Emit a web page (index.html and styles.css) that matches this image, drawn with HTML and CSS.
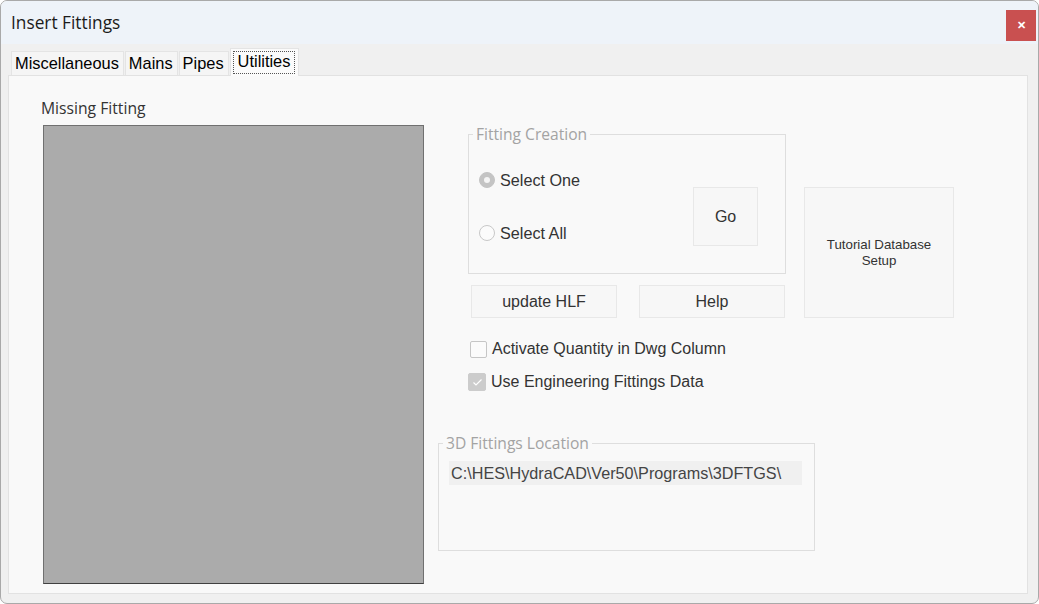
FILE: index.html
```html
<!DOCTYPE html>
<html lang="en">

<head>
    <meta charset="UTF-8">
    <title>Insert Fittings</title>
    <link rel="stylesheet" href="styles.css">
</head>

<body>
    <div class="ventana">
        <div class="titulo">
            <span class="titulo-texto">Insert Fittings</span>
            <div class="cerrar">&#x2715;</div>
        </div>

        <div class="pestanas">
            <div class="pestana">Miscellaneous</div>
            <div class="pestana">Mains</div>
            <div class="pestana">Pipes</div>
            <div class="pestana activa"><span class="foco">Utilities</span></div>
        </div>

        <div class="panel">
            <div class="izquierda">
                <div class="etiqueta">Missing Fitting</div>
                <div class="vista"></div>
            </div>

            <div class="derecha">
                <div class="arriba">
                    <div class="grupo-col">
                        <fieldset class="grupo creacion">
                            <legend>Fitting Creation</legend>
                            <div class="creacion-cuerpo">
                                <div class="radios">
                                    <label class="opcion"><span class="radio marcado"></span>Select One</label>
                                    <label class="opcion"><span class="radio"></span>Select All</label>
                                </div>
                                <div class="boton go">Go</div>
                            </div>
                        </fieldset>
                        <div class="botones">
                            <div class="boton ancho">update HLF</div>
                            <div class="boton ancho">Help</div>
                        </div>
                    </div>
                    <div class="boton tutorial">Tutorial Database<br>Setup</div>
                </div>

                <label class="check uno"><span class="caja"></span>Activate Quantity in Dwg Column</label>
                <label class="check dos"><span class="caja marcada">
                    <svg width="11" height="9" viewBox="0 0 11 9"><path d="M1.5 4.5 L4 7 L9.5 1.5" fill="none" stroke="#fff" stroke-width="1.2"/></svg>
                </span>Use Engineering Fittings Data</label>

                <fieldset class="grupo ubicacion">
                    <legend>3D Fittings Location</legend>
                    <div class="ruta">C:\HES\HydraCAD\Ver50\Programs\3DFTGS\</div>
                </fieldset>
            </div>
        </div>
    </div>
</body>

</html>
```

FILE: styles.css
```css
body {
    margin: 0;
    background-color: #ffffff;
    font-family: "Liberation Sans", Arial, sans-serif;
    color: #333;
}

.ventana {
    width: 1037px;
    height: 602px;
    border: 1px solid #a9a9a9;
    border-radius: 7px;
    background-color: #f0f0f0;
    overflow: hidden;
}

.titulo {
    height: 43px;
    background-color: #eef3f9;
    display: flex;
    align-items: center;
    justify-content: space-between;
}

.titulo-texto {
    margin-left: 10px;
    font-family: "Open Sans", "Noto Sans", sans-serif;
    font-size: 17.3px;
    color: #1b1b1b;
}

.cerrar {
    width: 30px;
    height: 31px;
    margin-right: 2px;
    margin-top: 6px;
    background-color: #c95050;
    color: #fff;
    font-size: 11px;
    font-weight: bold;
    display: flex;
    align-items: center;
    justify-content: center;
}

.pestanas {
    height: 31px;
    display: flex;
    align-items: flex-end;
    padding-left: 10px;
}

.pestana {
    height: 24px;
    padding: 0 4px 0 3px;
    background-color: #f5f5f5;
    border: 1px solid #e4e4e4;
    border-bottom: none;
    margin-right: 1px;
    font-size: 16.4px;
    color: #000;
    line-height: 23px;
    box-sizing: border-box;
}

.activa {
    height: 28px;
    background-color: #fbfbfb;
    padding: 2px 3px 0 2px;
    position: relative;
    z-index: 1;
    margin-bottom: -1px;
    line-height: 19px;
}

.foco {
    display: block;
    border: 1px dotted #555;
    padding: 0 4px 0 4px;
    height: 23px;
    box-sizing: border-box;
}

.panel {
    margin-left: 7px;
    width: 1020px;
    height: 519px;
    box-sizing: border-box;
    border: 1px solid #e2e2e2;
    background-color: #f9f9f9;
    display: flex;
    padding: 22px 0 0 32px;
}

.izquierda {
    width: 383px;
}

.etiqueta {
    font-family: "Open Sans", "Noto Sans", sans-serif;
    font-size: 15.7px;
    height: 27px;
    line-height: 21px;
    color: #333;
}

.vista {
    margin-left: 2px;
    width: 381px;
    height: 459px;
    box-sizing: border-box;
    background-color: #ababab;
    border: 1px solid #707070;
    border-bottom-color: #404040;
}

.derecha {
    margin-left: 14px;
    display: flex;
    flex-direction: column;
}

.arriba {
    display: flex;
    padding-left: 30px;
    margin-top: 27px;
}

.grupo {
    margin: 0;
    padding: 0;
    border: 1px solid #dedede;
    box-sizing: border-box;
}

.grupo legend {
    font-family: "Open Sans", "Noto Sans", sans-serif;
    font-size: 15.6px;
    color: #a3a3a3;
    padding: 0 3px;
    margin-left: 4px;
    line-height: 18px;
}

.creacion {
    width: 318px;
    height: 149px;
}

.creacion-cuerpo {
    display: flex;
    padding-left: 10px;
}

.radios {
    display: flex;
    flex-direction: column;
    padding-top: 28px;
    gap: 35px;
}

.opcion {
    display: flex;
    align-items: center;
    font-size: 16.2px;
    height: 18px;
}

.radio {
    width: 16px;
    height: 16px;
    border-radius: 50%;
    border: 1px solid #c8c8c8;
    background-color: #fbfbfb;
    box-sizing: border-box;
    margin-right: 5px;
    display: flex;
    align-items: center;
    justify-content: center;
}

.radio.marcado {
    background-color: #c4c4c4;
    border-color: #c4c4c4;
}

.radio.marcado::after {
    content: "";
    width: 6px;
    height: 6px;
    border-radius: 50%;
    background-color: #f5f5f5;
}

.boton {
    background-color: #f7f7f7;
    border: 1px solid #e8e8e8;
    box-sizing: border-box;
    font-size: 16px;
    display: flex;
    align-items: center;
    justify-content: center;
    text-align: center;
    color: #333;
}

.go {
    width: 65px;
    height: 59px;
    margin-left: 113px;
    margin-top: 44px;
}

.botones {
    display: flex;
    gap: 22px;
    margin-top: 11px;
    margin-left: 3px;
}

.ancho {
    width: 146px;
    height: 33px;
}

.tutorial {
    width: 150px;
    height: 131px;
    margin-left: 18px;
    margin-top: 62px;
    font-size: 13.3px;
    line-height: 16px;
}

.check {
    display: flex;
    align-items: center;
    font-size: 16px;
    height: 18px;
}

.check.uno {
    margin-top: 22px;
    margin-left: 32px;
}

.check.dos {
    margin-top: 15px;
    margin-left: 30px;
}

.caja {
    width: 17px;
    height: 17px;
    border: 1px solid #c6c6c6;
    border-radius: 2px;
    background-color: #fbfbfb;
    box-sizing: border-box;
    margin-right: 5px;
    display: flex;
    align-items: center;
    justify-content: center;
}

.caja.marcada {
    width: 18px;
    height: 18px;
    background-color: #cccccc;
    border-color: #cccccc;
}

.ubicacion {
    width: 377px;
    height: 117px;
    margin-top: 43px;
}

.ruta {
    margin: 9px 0 0 10px;
    width: 353px;
    height: 24px;
    background-color: #f0f0f0;
    font-size: 16.2px;
    line-height: 24px;
    padding-left: 2px;
    box-sizing: border-box;
    color: #444;
    white-space: nowrap;
}
```
